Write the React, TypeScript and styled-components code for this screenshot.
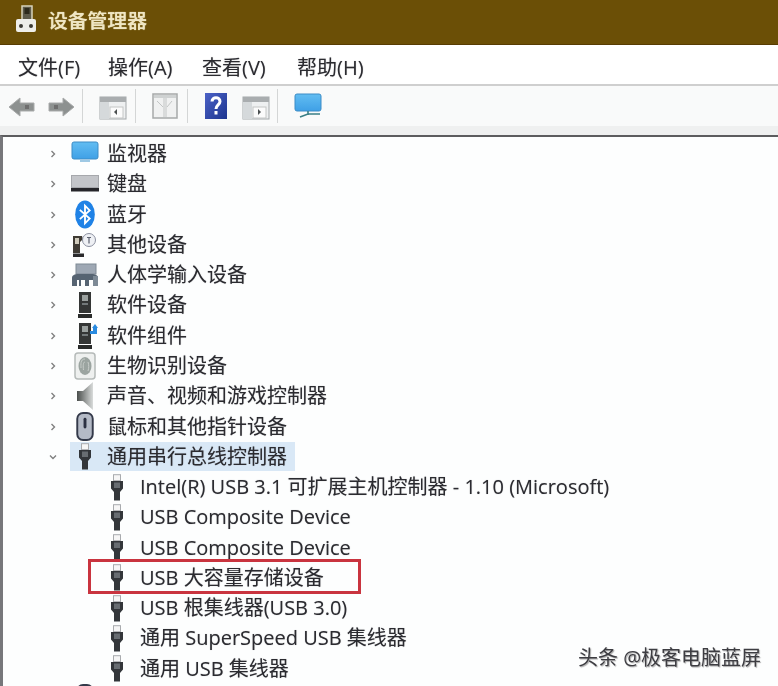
import React from 'react';
import styled, { createGlobalStyle } from 'styled-components';

const Global = createGlobalStyle`
  html, body { margin: 0; padding: 0; background: #fff; }
  body { font-family: "Open Sans", "Noto Sans CJK SC", sans-serif; }
`;

const Page = styled.div`
  position: relative;
  width: 778px;
  height: 686px;
  overflow: hidden;
  background: #fff;
  filter: blur(0.7px);
  font-family: "Open Sans", "Noto Sans CJK SC", sans-serif;
  color: #2c2c30;
`;

const TitleBar = styled.header`
  height: 45px;
  box-sizing: border-box;
  display: flex;
  align-items: center;
  gap: 11px;
  padding: 0 0 6px 15px;
  background: #6b4f06;
  border-bottom: 1px solid #573c02;
`;

const TitleText = styled.span`
  font-size: 19.8px;
  font-weight: 500;
  color: #efe6c4;
  text-shadow: 0 0 1px #fff3c8;
`;

const MenuBar = styled.nav`
  height: 41px;
  box-sizing: border-box;
  display: flex;
  align-items: center;
  padding: 4px 0 0 18px;
  background: #fff;
  border-bottom: 2px solid #cfcfcf;
`;

const MenuItem = styled.span<{ $width: number }>`
  width: ${p => p.$width}px;
  font-size: 20px;
  color: #2b2b30;
  text-shadow: 0 0 1px rgba(30, 30, 35, 0.35);
`;

const ToolBar = styled.div`
  height: 40px;
  box-sizing: border-box;
  display: flex;
  align-items: center;
  padding-left: 8px;
  background: #f9fafa;
`;

const ToolGroup = styled.div<{ $width: number; $gap?: number; $pad?: number; $last?: boolean }>`
  width: ${p => p.$width}px;
  height: 34px;
  box-sizing: border-box;
  display: flex;
  align-items: center;
  gap: ${p => p.$gap ?? 0}px;
  padding-left: ${p => p.$pad ?? 0}px;
  border-right: ${p => (p.$last ? 'none' : '1px solid #d4d6d6')};
`;

const Strip = styled.div`
  height: 9px;
  background: #eff0f0;
`;

const Tree = styled.main`
  height: 600px;
  box-sizing: border-box;
  padding: 2px 0 0 0;
  background: #fdfefe;
  border-top: 2px solid #5c5c5e;
  border-left: 3px solid #77777b;
`;

const Row = styled.div<{ $child?: boolean }>`
  position: relative;
  height: 30.28px;
  display: flex;
  align-items: center;
  padding-left: ${p => (p.$child ? 106 : 45)}px;
`;

const Twist = styled.span`
  width: 10px;
  height: 14px;
  display: flex;
  align-items: center;
  justify-content: center;
  margin-right: 12px;
`;

const IconSlot = styled.span<{ $child?: boolean }>`
  width: ${p => (p.$child ? 16 : 30)}px;
  height: 30px;
  display: flex;
  align-items: center;
  justify-content: center;
  margin-right: ${p => (p.$child ? 15 : 7)}px;
`;

const Label = styled.span`
  font-size: 20px;
  line-height: 28px;
  white-space: nowrap;
  color: #2b2b30;
  text-shadow: 0 0 1px rgba(30, 30, 35, 0.35);
`;

const Selection = styled.span`
  position: absolute;
  left: 67px;
  top: 0;
  width: 225px;
  height: 29px;
  background: #d9e8f6;
`;

const Layer = styled.span`
  position: relative;
  display: flex;
  align-items: center;
`;

const RedBox = styled.span`
  position: absolute;
  left: 85px;
  top: -4px;
  width: 273px;
  height: 35px;
  box-sizing: border-box;
  border: 3px solid #c9343f;
`;

const Watermark = styled.div`
  position: absolute;
  left: 578px;
  top: 644px;
  font-size: 20px;
  line-height: 28px;
  color: #3d3d42;
  text-shadow: 1px 1px 1px #aaa;
`;

const Chevron = ({ open }: { open?: boolean }) => (
  <svg width="10" height="12" viewBox="0 0 10 12" fill="none" stroke="#808080" strokeWidth="1.4">
    {open ? <path d="M2 4.5 5 7.5 8 4.5" /> : <path d="M3.5 3 6.5 6 3.5 9" />}
  </svg>
);

const DeviceIcon = () => (
  <svg width="22" height="30" viewBox="0 0 22 30">
    <rect x="7" y="2" width="10" height="14" fill="#5d5a4a" stroke="#d8d4bc" strokeWidth="1.5" />
    <rect x="9.5" y="4" width="5" height="6" fill="#2d2a1c" />
    <rect x="1" y="15" width="20" height="13" rx="2" fill="#eeeeea" />
    <circle cx="6" cy="22" r="2" fill="#3c3a34" />
    <circle cx="16" cy="22" r="2" fill="#3c3a34" />
  </svg>
);

const BackArrow = ({ flip }: { flip?: boolean }) => (
  <svg width="28" height="22" viewBox="0 -2 28 22" style={flip ? { transform: 'scaleX(-1)' } : undefined}>
    <path d="M1 10 12 1v5h14v8H12v5z" fill="#8d9190" stroke="#a8aaaa" />
    <rect x="17" y="8" width="4" height="4" fill="#6e6e6e" />
  </svg>
);

const PaneIcon = ({ mark }: { mark: 'left' | 'right' }) => (
  <svg width="28" height="28" viewBox="0 -4 28 28">
    <rect x="1" y="1" width="26" height="22" fill="#eef0f1" stroke="#a4a8aa" />
    <rect x="1" y="1" width="26" height="5" fill="#a9adaf" />
    <rect x="1" y="6" width="9" height="17" fill="#d5d9db" />
    <rect x="11" y="11" width="13" height="11" fill="#fbfbfb" stroke="#c4c6c6" />
    <path d={mark === 'left' ? 'M18 13v6l-3-3z' : 'M16 13v6l3-3z'} fill="#4b4f50" />
  </svg>
);

const SheetIcon = () => (
  <svg width="26" height="26" viewBox="0 0 26 26">
    <rect x="1" y="1" width="24" height="24" fill="#f0f1f1" stroke="#a6a9a9" strokeWidth="1.5" />
    <rect x="2" y="2" width="22" height="3" fill="#cfd2d2" />
    <path d="M12 5v19M14 5v19M5 8l6 6M20 8l-5 6" stroke="#c2c5c5" fill="none" />
  </svg>
);

const HelpIcon = () => (
  <svg width="22" height="26" viewBox="0 0 22 26">
    <defs>
      <linearGradient id="helpBg" x1="0" y1="0" x2="1" y2="1">
        <stop offset="0" stopColor="#4c62c6" />
        <stop offset="1" stopColor="#1d3590" />
      </linearGradient>
    </defs>
    <rect width="22" height="26" fill="url(#helpBg)" />
    <path d="M7 8.5c0-5 8-5 8 0 0 3.5-4 3.5-4 7.5" fill="none" stroke="#fff" strokeWidth="3" />
    <rect x="9.5" y="18" width="3" height="3.5" fill="#fff" />
  </svg>
);

const MonitorIcon = ({ stand = 'net' }: { stand?: 'net' | 'foot' }) => (
  <svg width="28" height="26" viewBox="0 0 28 26">
    <defs>
      <linearGradient id={`screen-${stand}`} x1="0" y1="0" x2="0" y2="1">
        <stop offset="0" stopColor="#62bdf2" />
        <stop offset="1" stopColor="#3fa0e6" />
      </linearGradient>
    </defs>
    <rect x="1" y="1" width="26" height="17" rx="2" fill={`url(#screen-${stand})`} stroke="#3c8cc6" />
    {stand === 'net' ? (
      <path d="M14 18v4M6 24l8-3h12" stroke="#3a7f86" strokeWidth="1.6" fill="none" />
    ) : (
      <rect x="9" y="18.5" width="10" height="2.5" fill="#9fc9e4" />
    )}
  </svg>
);

const KeyboardIcon = () => (
  <svg width="28" height="18" viewBox="0 0 28 18">
    <rect x="0.5" y="0.5" width="27" height="12" fill="#c3c5c9" stroke="#a6a8ac" />
    <rect x="0" y="13" width="28" height="3.5" fill="#26262a" />
  </svg>
);

const BluetoothIcon = () => (
  <svg width="22" height="29" viewBox="0 0 20 28">
    <ellipse cx="10" cy="14" rx="9.5" ry="13.5" fill="#1f82e6" />
    <path d="M5 9.5 14.5 18 10 22.5V5.5L14.5 10 5 18.5" fill="none" stroke="#fff" strokeWidth="1.8" />
  </svg>
);

const OtherIcon = () => (
  <svg width="26" height="26" viewBox="0 0 26 26">
    <path d="M1 4h9l1 3-3 3v11H1z" fill="#3f3b34" />
    <rect x="1" y="21.5" width="11" height="3.5" fill="#2a2a2c" />
    <rect x="3" y="6" width="4" height="6" fill="#cfcabb" />
    <circle cx="17" cy="8" r="6.5" fill="#eef0f4" stroke="#8b90a0" />
    <path d="M15 5.5h4M17 5.5v6" stroke="#5d6270" strokeWidth="1.2" fill="none" />
  </svg>
);

const HidIcon = () => (
  <svg width="28" height="24" viewBox="0 0 28 24">
    <rect x="5" y="1" width="20" height="10" fill="#9ea8b4" stroke="#7f8994" />
    <path d="M1 23v-8c0-3 3-4 6-4h14c3 0 6 1 6 4v8h-5v-6h-4v6h-4v-6h-4v6H8v-6H6v6z" fill="#566472" />
    <rect x="22" y="13" width="5" height="10" fill="#7d8a96" />
  </svg>
);

const BoxIcon = ({ badge }: { badge?: boolean }) => (
  <svg width="26" height="28" viewBox="0 0 26 28">
    <rect x="7" y="1" width="12" height="21" fill="#343635" />
    <rect x="10" y="4" width="6" height="6" fill="#9aa09e" />
    <rect x="10" y="12" width="6" height="2" fill="#73797a" />
    <rect x="6" y="23" width="14" height="4" fill="#2a2c2b" />
    {badge && <path d="M18 9h3V6h-1l3-4 3 4h-1v6h-7z" fill="#2a8be0" />}
  </svg>
);

const FingerIcon = () => (
  <svg width="22" height="28" viewBox="0 0 22 28">
    <rect x="1" y="1" width="20" height="26" rx="3" fill="#eef0ef" stroke="#b5bab9" strokeWidth="1.5" />
    <ellipse cx="11" cy="14" rx="6.5" ry="9" fill="#9ba4a0" />
    <path d="M11 7c-5 0-4 6-4 9M11 10c-2 0-2 4-1.5 8M14 10c1 3 1 6 0 9" stroke="#c8cdca" fill="none" />
  </svg>
);

const SpeakerIcon = () => (
  <svg width="18" height="30" viewBox="0 0 18 30">
    <defs>
      <linearGradient id="cone" x1="0" y1="0" x2="1" y2="0">
        <stop offset="0" stopColor="#4a4e4c" />
        <stop offset="1" stopColor="#d9dcdb" />
      </linearGradient>
    </defs>
    <path d="M1 10h6L17 1v28L7 20H1z" fill="url(#cone)" />
  </svg>
);

const MouseIcon = () => (
  <svg width="20" height="29" viewBox="0 0 18 30">
    <rect x="1" y="1" width="16" height="28" rx="6" fill="#b4bac6" stroke="#343a4a" strokeWidth="2" />
    <rect x="7.5" y="6" width="3" height="11" rx="1.5" fill="#2c3142" />
  </svg>
);

const UsbIcon = () => (
  <svg width="14" height="27" viewBox="0 0 14 27">
    <rect x="3.5" y="0.7" width="7" height="6" fill="#f6f6f6" stroke="#a9abae" />
    <path d="M1 7h12v7.5l-3 3.5v8.5H4V18l-3-3.5z" fill="#33363a" />
    <rect x="4" y="8.5" width="6" height="5.5" fill="#686d72" />
  </svg>
);

type Item = { label: string; icon: React.ReactNode };

const categories: Item[] = [
  { label: '监视器', icon: <MonitorIcon stand="foot" /> },
  { label: '键盘', icon: <KeyboardIcon /> },
  { label: '蓝牙', icon: <BluetoothIcon /> },
  { label: '其他设备', icon: <OtherIcon /> },
  { label: '人体学输入设备', icon: <HidIcon /> },
  { label: '软件设备', icon: <BoxIcon /> },
  { label: '软件组件', icon: <BoxIcon badge /> },
  { label: '生物识别设备', icon: <FingerIcon /> },
  { label: '声音、视频和游戏控制器', icon: <SpeakerIcon /> },
  { label: '鼠标和其他指针设备', icon: <MouseIcon /> },
];

const usbDevices = [
  'Intel(R) USB 3.1 可扩展主机控制器 - 1.10 (Microsoft)',
  'USB Composite Device',
  'USB Composite Device',
  'USB 大容量存储设备',
  'USB 根集线器(USB 3.0)',
  '通用 SuperSpeed USB 集线器',
  '通用 USB 集线器',
];

export default function App() {
  return (
    <Page>
      <Global />
      <TitleBar>
        <DeviceIcon />
        <TitleText>设备管理器</TitleText>
      </TitleBar>
      <MenuBar>
        <MenuItem $width={90}>文件(F)</MenuItem>
        <MenuItem $width={94}>操作(A)</MenuItem>
        <MenuItem $width={95}>查看(V)</MenuItem>
        <MenuItem $width={70}>帮助(H)</MenuItem>
      </MenuBar>
      <ToolBar>
        <ToolGroup $width={75} $gap={11}>
          <BackArrow />
          <BackArrow flip />
        </ToolGroup>
        <ToolGroup $width={53} $pad={16}>
          <PaneIcon mark="left" />
        </ToolGroup>
        <ToolGroup $width={52} $pad={16}>
          <SheetIcon />
        </ToolGroup>
        <ToolGroup $width={90} $pad={17} $gap={15}>
          <HelpIcon />
          <PaneIcon mark="right" />
        </ToolGroup>
        <ToolGroup $width={60} $pad={16} $last>
          <MonitorIcon />
        </ToolGroup>
      </ToolBar>
      <Strip />
      <Tree>
        {categories.map(item => (
          <Row key={item.label}>
            <Twist><Chevron /></Twist>
            <IconSlot>{item.icon}</IconSlot>
            <Label>{item.label}</Label>
          </Row>
        ))}
        <Row>
          <Selection />
          <Twist><Chevron open /></Twist>
          <Layer>
            <IconSlot><UsbIcon /></IconSlot>
            <Label>通用串行总线控制器</Label>
          </Layer>
        </Row>
        {usbDevices.map((label, i) => (
          <Row $child key={i}>
            {i === 3 && <RedBox />}
            <IconSlot $child><UsbIcon /></IconSlot>
            <Label>{label}</Label>
          </Row>
        ))}
        <Row>
          <Twist />
          <IconSlot><MouseIcon /></IconSlot>
        </Row>
      </Tree>
      <Watermark>头条 @极客电脑蓝屏</Watermark>
    </Page>
  );
}
